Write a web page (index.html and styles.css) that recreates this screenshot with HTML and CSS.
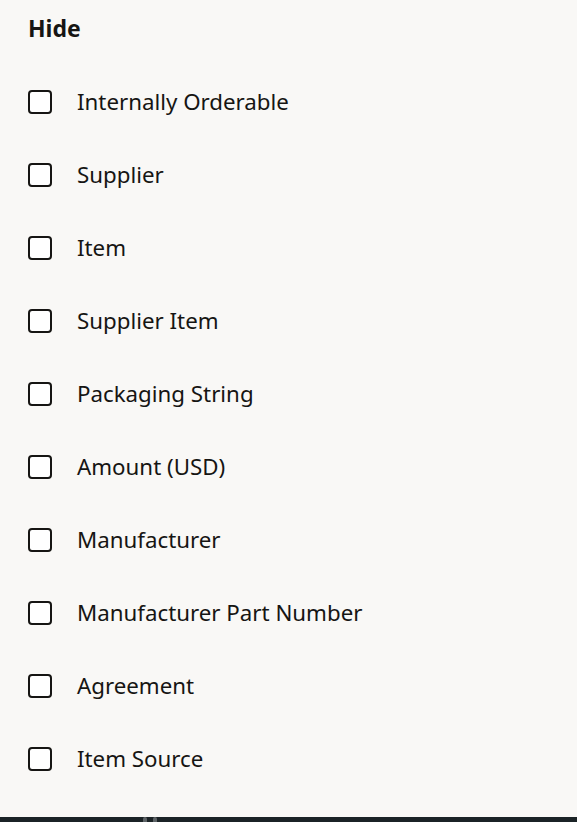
FILE: index.html
```html
<!DOCTYPE html>
<html lang="en">
<head>
  <meta charset="UTF-8">
  <meta name="viewport" content="width=device-width, initial-scale=1.0">
  <title>Hide Columns</title>
  <link rel="stylesheet" href="styles.css">
</head>
<body>

  <div class="panel">
    <h2 class="panel-title">Hide</h2>

    <ul class="option-list">
      <li class="option"><span class="checkbox"></span><span class="label">Internally Orderable</span></li>
      <li class="option"><span class="checkbox"></span><span class="label">Supplier</span></li>
      <li class="option"><span class="checkbox"></span><span class="label">Item</span></li>
      <li class="option"><span class="checkbox"></span><span class="label">Supplier Item</span></li>
      <li class="option"><span class="checkbox"></span><span class="label">Packaging String</span></li>
      <li class="option"><span class="checkbox"></span><span class="label">Amount (USD)</span></li>
      <li class="option"><span class="checkbox"></span><span class="label">Manufacturer</span></li>
      <li class="option"><span class="checkbox"></span><span class="label">Manufacturer Part Number</span></li>
      <li class="option"><span class="checkbox"></span><span class="label">Agreement</span></li>
      <li class="option"><span class="checkbox"></span><span class="label">Item Source</span></li>
    </ul>
  </div>

  <div class="footer-bar">
    <span class="handle"></span>
    <span class="handle"></span>
  </div>

</body>
</html>
```

FILE: styles.css
```css
/* General Reset */
* {
  margin: 0;
  padding: 0;
  box-sizing: border-box;
}

body {
  background: #f9f8f6;
  font-family: 'Noto Sans', sans-serif;
  color: #161513;
  height: 100vh;
  display: flex;
  flex-direction: column;
  overflow: hidden;
}

.panel {
  flex: 1;
  padding: 13px 28px 0;
}

.panel-title {
  font-size: 23px;
  font-weight: bold;
  line-height: 30px;
}

.option-list {
  list-style: none;
  margin-top: 22px;
}

.option {
  display: flex;
  align-items: center;
  height: 73px;
}

.checkbox {
  width: 24px;
  height: 24px;
  border: 2px solid #161513;
  border-radius: 4px;
  background: #fff;
  flex-shrink: 0;
}

.label {
  margin-left: 25px;
  font-size: 22.3px;
}

.footer-bar {
  height: 5px;
  background: #1b2326;
  display: flex;
  gap: 6px;
  padding-left: 143px;
}

.handle {
  width: 4px;
  height: 5px;
  background: #5d6366;
  border-radius: 2px 2px 0 0;
}
```
